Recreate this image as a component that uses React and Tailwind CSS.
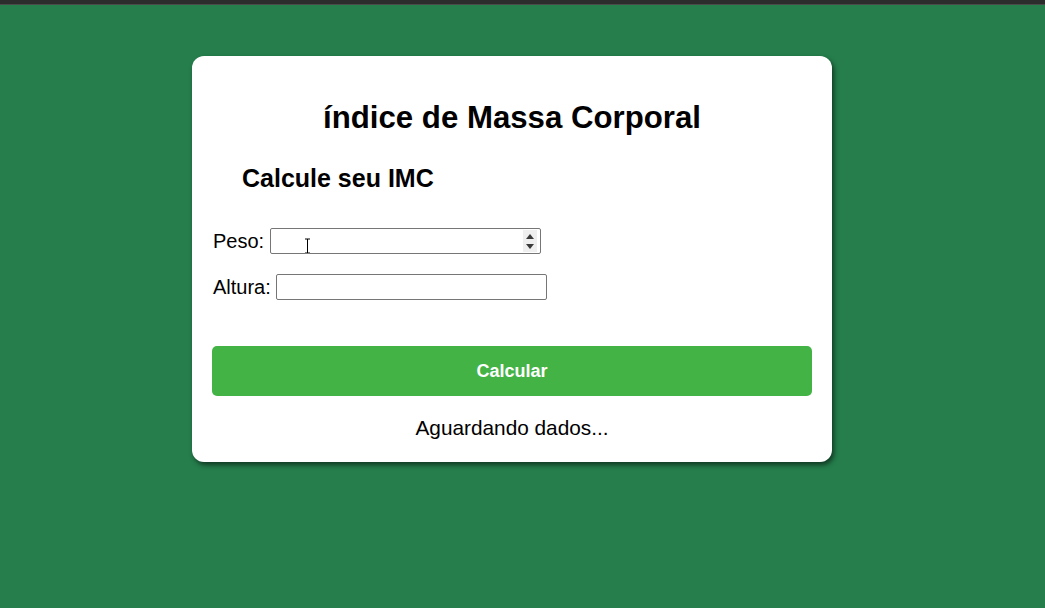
export default function App() {
    return (
        <div className="min-h-[608px] flex flex-col bg-[#257e4c]" style={{ fontFamily: '"Liberation Sans", Arial, sans-serif' }}>
            <div className="h-[5px] bg-[#2c2c2c] border-b border-[#4a4a4a]" />

            <div className="flex justify-center pt-[51px] pr-[21px]">
                <div className="w-[640px] bg-white rounded-[12px] shadow-[2px_3px_5px_rgba(0,0,0,0.55)] px-5 pt-5 pb-[23px] text-black">
                    <h1 className="mt-[23px] text-[31.2px] font-bold text-center leading-[37px]">
                        índice de Massa Corporal
                    </h1>

                    <h2 className="mt-[28px] ml-[30px] text-[25px] font-bold leading-[29px]">
                        Calcule seu IMC
                    </h2>

                    <div className="mt-[35px] flex flex-col gap-5 text-[20px] leading-[23px]">
                        <div className="flex items-center">
                            <label htmlFor="peso" className="ml-[1px] mr-[6px]">Peso:</label>
                            <div className="relative flex items-center w-[271px] h-[26px] border border-[#767676] rounded-[2px] bg-white">
                                <input id="peso" type="text" className="flex-1 h-full px-1 outline-none text-[13px]" />
                                <div className="w-[14px] h-[22px] mr-[3px] bg-[#efefef] flex flex-col items-center justify-center gap-[5px]">
                                    <svg width="8" height="5" viewBox="0 0 8 5"><path d="M0 5 L4 0 L8 5 Z" fill="#3a3a3a" /></svg>
                                    <svg width="8" height="5" viewBox="0 0 8 5"><path d="M0 0 L4 5 L8 0 Z" fill="#3a3a3a" /></svg>
                                </div>
                                <svg className="absolute left-[33px] top-[9px]" width="7" height="16" viewBox="0 0 7 16">
                                    <path d="M1 1 H6 M3.5 1 V15 M1 15 H6" stroke="#fff" strokeWidth="2.5" fill="none" />
                                    <path d="M1 1 H6 M3.5 1 V15 M1 15 H6" stroke="#000" strokeWidth="1" fill="none" />
                                </svg>
                            </div>
                        </div>

                        <div className="flex items-center">
                            <label htmlFor="altura" className="ml-[1px] mr-[5px]">Altura:</label>
                            <input id="altura" type="text" className="w-[271px] h-[26px] px-1 border border-[#767676] rounded-[2px] outline-none text-[13px]" />
                        </div>
                    </div>

                    <button
                        type="button"
                        className="mt-[46px] w-full h-[50px] rounded-[5px] bg-[#44b346] text-white text-[18px] font-bold"
                    >
                        Calcular
                    </button>

                    <p className="mt-[20px] text-[20.8px] leading-[23px] text-center">
                        Aguardando dados...
                    </p>
                </div>
            </div>
        </div>
    );
}
